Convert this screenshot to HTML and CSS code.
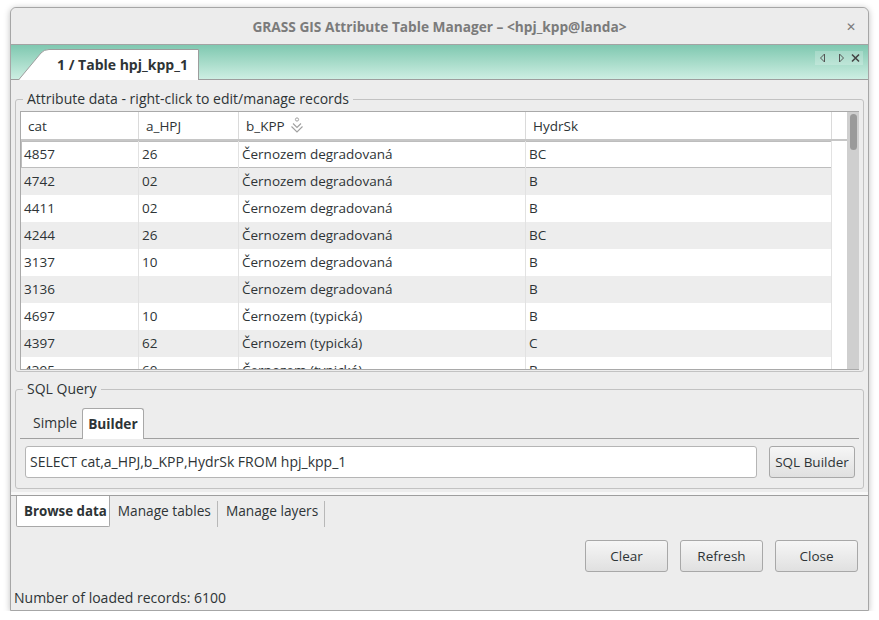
FILE: index.html
```html
<!DOCTYPE html>
<html>
<head>
<meta charset="utf-8">
<link rel="stylesheet" href="styles.css">
</head>
<body>
<div class="window">
  <div class="titlebar">
    <span class="title">GRASS GIS Attribute Table Manager – &lt;hpj_kpp@landa&gt;</span>
    <span class="wclose">✕</span>
  </div>
  <div class="layerbar">
    <div class="layertab">
      <svg class="tabshape" width="182" height="31" viewBox="0 0 182 31"><path d="M0.5 31 L23 4 Q26 0.5 31 0.5 L180.5 0.5 L180.5 31" fill="#ffffff" stroke="#9d9d9d" stroke-width="1"/></svg>
      <span class="tablabel">1 / Table hpj_kpp_1</span>
    </div>
    <div class="navbtns">
      <svg width="48" height="14" viewBox="0 0 48 14">
        <path d="M9.5 3 L5.5 7 L9.5 11 Z" fill="none" stroke="#555" stroke-width="1"/>
        <path d="M24.5 3 L28.5 7 L24.5 11 Z" fill="none" stroke="#555" stroke-width="1"/>
        <path d="M37 3.5 L44 10.5 M44 3.5 L37 10.5" stroke="#444" stroke-width="1.6"/>
      </svg>
    </div>
  </div>
  <div class="page">
    <fieldset class="group attr">
      <legend>Attribute data - right-click to edit/manage records</legend>
      <div class="tablewrap">
        <div class="grid">
          <div class="row head">
            <div class="cell">cat</div>
            <div class="cell">a_HPJ</div>
            <div class="cell">b_KPP <svg class="sorticon" width="14" height="17" viewBox="0 0 14 17"><circle cx="7" cy="2.5" r="1.6" fill="none" stroke="#a0a0a0" stroke-width="1"/><path d="M3 6.5 L7 10.5 L11 6.5 M1.5 9.5 L7 15 L12.5 9.5" fill="none" stroke="#a0a0a0" stroke-width="1.1"/></svg></div>
            <div class="cell">HydrSk</div>
            <div class="cell"></div>
          </div>
          <div class="row focus"><div class="cell">4857</div><div class="cell">26</div><div class="cell">Černozem degradovaná</div><div class="cell">BC</div><div class="cell"></div></div>
          <div class="row alt"><div class="cell">4742</div><div class="cell">02</div><div class="cell">Černozem degradovaná</div><div class="cell">B</div><div class="cell"></div></div>
          <div class="row"><div class="cell">4411</div><div class="cell">02</div><div class="cell">Černozem degradovaná</div><div class="cell">B</div><div class="cell"></div></div>
          <div class="row alt"><div class="cell">4244</div><div class="cell">26</div><div class="cell">Černozem degradovaná</div><div class="cell">BC</div><div class="cell"></div></div>
          <div class="row"><div class="cell">3137</div><div class="cell">10</div><div class="cell">Černozem degradovaná</div><div class="cell">B</div><div class="cell"></div></div>
          <div class="row alt"><div class="cell">3136</div><div class="cell"></div><div class="cell">Černozem degradovaná</div><div class="cell">B</div><div class="cell"></div></div>
          <div class="row"><div class="cell">4697</div><div class="cell">10</div><div class="cell">Černozem (typická)</div><div class="cell">B</div><div class="cell"></div></div>
          <div class="row alt"><div class="cell">4397</div><div class="cell">62</div><div class="cell">Černozem (typická)</div><div class="cell">C</div><div class="cell"></div></div>
          <div class="row"><div class="cell">4395</div><div class="cell">60</div><div class="cell">Černozem (typická)</div><div class="cell">B</div><div class="cell"></div></div>
        </div>
        <div class="vscroll"><div class="thumb"></div></div>
      </div>
    </fieldset>
    <fieldset class="group sql">
      <legend>SQL Query</legend>
      <div class="tabs">
        <span class="tab">Simple</span>
        <span class="tab active">Builder</span>
      </div>
      <div class="sqlrow">
        <div class="input">SELECT cat,a_HPJ,b_KPP,HydrSk FROM hpj_kpp_1</div>
        <button class="btn sqlbtn">SQL Builder</button>
      </div>
    </fieldset>
  </div>
  <div class="bottomtabs">
    <span class="btab active">Browse data</span>
    <span class="btab">Manage tables</span>
    <span class="btab">Manage layers</span>
  </div>
  <div class="buttons">
    <button class="btn">Clear</button>
    <button class="btn">Refresh</button>
    <button class="btn">Close</button>
  </div>
  <div class="status">Number of loaded records: 6100</div>
</div>
</body>
</html>
```
FILE: styles.css
```css
* { box-sizing: border-box; }
html, body { margin: 0; padding: 0; background: #ffffff; }
body {
  font-family: "Open Sans", "DejaVu Sans", sans-serif;
  font-size: 14px;
  color: #2e3436;
}
.window {
  margin: 7px 0 0 10px;
  width: 859px;
  height: 604px;
  border: 1px solid #a6a6a6;
  border-radius: 6px 6px 0 0;
  background: #ededed;
  box-shadow: 0 1px 6px rgba(0,0,0,0.25);
  display: flex;
  flex-direction: column;
}
.titlebar {
  height: 37px;
  border-bottom: 1px solid #a3a3a3;
  border-radius: 6px 6px 0 0;
  background: #ececec;
  display: flex;
  align-items: center;
  justify-content: center;
  position: relative;
}
.title {
  font-weight: bold;
  font-size: 13.7px;
  color: #7b7b7b;
}
.wclose {
  position: absolute;
  right: 12px;
  top: 10px;
  font-size: 12px;
  font-weight: bold;
  color: #7a7a7a;
}
.layerbar {
  height: 35px;
  border-bottom: 1px solid #9d9d9d;
  background: linear-gradient(#7fc8b0, #cdeee2);
  display: flex;
  align-items: flex-end;
  justify-content: space-between;
  padding-left: 7px;
  padding-right: 5px;
}
.layertab {
  position: relative;
  width: 182px;
  height: 31px;
  margin-bottom: -1px;
  display: flex;
  align-items: center;
  padding-left: 39px;
}
.tabshape { position: absolute; left: 0; top: 0; }
.tablabel {
  position: relative;
  font-weight: bold;
  font-size: 14px;
  color: #2e3436;
}
.navbtns {
  align-self: flex-start;
  margin-top: 6px;
  width: 48px;
  height: 14px;
  background: rgba(255,255,255,0.22);
  display: flex;
}
.page {
  padding: 0 4px;
  flex: 0 0 auto;
}
.group {
  border: 1px solid #c2c2c2;
  border-radius: 3px;
  margin: 0;
  min-width: 0;
}
.group legend {
  padding: 0 4px;
  margin-left: 3px;
  line-height: 16px;
  color: #2e3436;
}
.attr {
  margin-top: 11px;
  padding: 4px 4px 1px 4px;
}
.tablewrap {
  display: flex;
  height: 259px;
  border: 1px solid #a9a9a9;
  border-right: none;
  background: #ffffff;
  overflow: hidden;
}
.grid { width: 826px; flex: 0 0 826px; font-size: 13.5px; }
.row {
  display: grid;
  grid-template-columns: 118px 100px 287px 306px 15px;
  height: 27px;
  background: #ffffff;
}
.row .cell {
  border-right: 1px solid #e2e2e2;
  padding-left: 3px;
  line-height: 26px;
  white-space: nowrap;
  overflow: hidden;
}
.row .cell:last-child { background: #ffffff; border-right: none; }
.row.alt { background: #ededed; }
.row.head {
  height: 29px;
  border-bottom: 2px solid #c6c6c6;
}
.row.head .cell {
  padding-left: 7px;
  line-height: 28px;
  border-right: 1px solid #dadada;
  display: flex;
  align-items: center;
  gap: 5px;
}
.row.head .cell:last-child { border-right: none; }
.row.focus {
  box-shadow: inset 0 0 0 1px #bdbdbd;
}
.sorticon { display: block; }
.vscroll {
  width: 12px;
  flex: 0 0 12px;
  background: #cfcfcf;
  padding: 2px 2px 0 3px;
}
.thumb {
  width: 7px;
  height: 36px;
  border-radius: 4px;
  background: #9a9a9a;
}
.sql {
  margin-top: 9px;
  padding: 11px 4px 10px 4px;
}
.tabs {
  display: flex;
  padding-left: 5px;
  border-bottom: 1px solid #a0a0a0;
  height: 31px;
  align-items: flex-end;
}
.tab {
  height: 30px;
  line-height: 29px;
  padding: 0 5px 0 8px;
}
.tab.active {
  background: #ffffff;
  border: 1px solid #a8a8a8;
  border-bottom: none;
  border-radius: 3px 3px 0 0;
  font-weight: bold;
  margin-bottom: -1px;
  height: 31px;
  padding: 0 5px;
  font-size: 13.7px;
}
.sqlrow {
  display: flex;
  gap: 12px;
  margin-top: 7px;
  padding-left: 5px;
  padding-right: 4px;
}
.input {
  flex: 1;
  height: 32px;
  line-height: 30px;
  background: #ffffff;
  border: 1px solid #b5b5b5;
  border-radius: 3px;
  padding-left: 4px;
  color: #2e3436;
}
.btn {
  font-family: inherit;
  font-size: 13.5px;
  color: #2e3436;
  height: 32px;
  width: 83px;
  border: 1px solid #a8a8a8;
  border-radius: 3px;
  background: linear-gradient(#f6f6f6, #e0e0e0);
  padding: 0;
}
.sqlbtn { width: 86px; }
.bottomtabs {
  margin-top: 6px;
  border-top: 1px solid #9e9e9e;
  box-shadow: 0 -3px 0 0 #f8f8f8;
  display: flex;
  align-items: flex-start;
  padding-left: 5px;
  height: 32px;
  font-size: 13.7px;
}
.btab {
  margin-top: 5px;
  height: 26px;
  line-height: 20px;
  padding: 0 6px 0 8px;
  border-right: 1px solid #b8b8b8;
}
.btab.active {
  background: #ffffff;
  margin-top: 0;
  height: 31px;
  line-height: 30px;
  border: 1px solid #a8a8a8;
  border-top: none;
  font-weight: bold;
  padding: 0 2px 0 7px;
  border-radius: 0 0 2px 2px;
  font-size: 13.3px;
}
.buttons {
  display: flex;
  justify-content: flex-end;
  gap: 12px;
  padding-right: 10px;
  margin-top: 13px;
}
.status {
  margin-top: auto;
  padding: 0 0 2px 3px;
  line-height: 20px;
}
```
